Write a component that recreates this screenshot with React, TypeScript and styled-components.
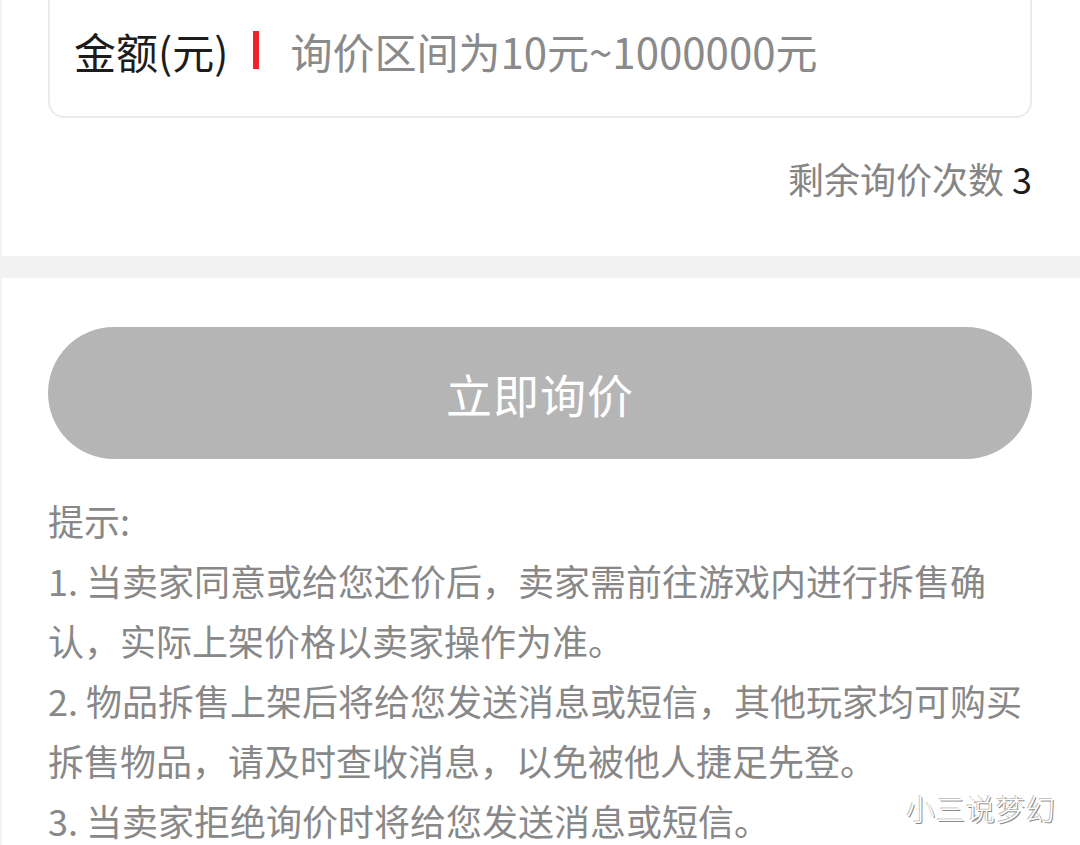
import React from "react";
import styled, { createGlobalStyle } from "styled-components";

const GlobalStyle = createGlobalStyle`
  html, body {
    margin: 0;
    padding: 0;
    background: #ffffff;
    font-family: "Noto Sans CJK SC", "Noto Sans", sans-serif;
  }
  * { box-sizing: border-box; }
`;

const Page = styled.div`
  position: relative;
  width: 1080px;
  height: 845px;
  overflow: hidden;
  background: #ffffff;
  border-left: 2px solid #f3f3f3;
`;

const Section = styled.section<{ $top?: number; $bottom?: number }>`
  background: #ffffff;
  padding: ${(p) => p.$top ?? 0}px 48px ${(p) => p.$bottom ?? 0}px 46px;
`;

const Divider = styled.div`
  height: 22px;
  background: #f2f2f2;
`;

const Card = styled.div`
  border: 2px solid #ebebeb;
  border-top: none;
  border-radius: 0 0 16px 16px;
  padding: 0 24px 16px 24px;
`;

const InputRow = styled.div`
  height: 100px;
  display: flex;
  align-items: center;
`;

const Label = styled.span`
  font-size: 42px;
  color: #1c1c1c;
  white-space: nowrap;
`;

const Caret = styled.span`
  width: 6px;
  height: 38px;
  background: #f0232d;
  margin: 0 31px 0 25px;
  flex: none;
`;

const Placeholder = styled.span`
  font-size: 42px;
  color: #8a8a8a;
  white-space: nowrap;
`;

const Remaining = styled.div`
  margin-top: 35px;
  height: 50px;
  line-height: 50px;
  text-align: right;
  font-size: 36px;
  color: #858585;
`;

const Count = styled.span`
  color: #1c1c1c;
`;

const SubmitButton = styled.button`
  display: flex;
  align-items: center;
  justify-content: center;
  width: 100%;
  height: 132px;
  border: none;
  border-radius: 66px;
  background: #b5b5b5;
  color: #ffffff;
  font-family: inherit;
  font-size: 46px;
  letter-spacing: 1px;
  cursor: default;
`;

const Tips = styled.div`
  margin-top: 31px;
  font-size: 36px;
  line-height: 60px;
  color: #888888;
`;

const TipLine = styled.div``;

const Watermark = styled.div`
  position: absolute;
  right: 24px;
  bottom: 16px;
  font-size: 29px;
  font-weight: 300;
  color: #ffffff;
  letter-spacing: 1px;
  text-shadow: 1px 1px 0 #8a8a8a, -1px -1px 0 #c4c4c4;
`;

export default function App() {
  return (
    <>
      <GlobalStyle />
      <Page>
        <Section $bottom={53}>
          <Card>
            <InputRow>
              <Label>金额(元)</Label>
              <Caret />
              <Placeholder>询价区间为10元~1000000元</Placeholder>
            </InputRow>
          </Card>
          <Remaining>
            剩余询价次数 <Count>3</Count>
          </Remaining>
        </Section>
        <Divider />
        <Section $top={49}>
          <SubmitButton>立即询价</SubmitButton>
          <Tips>
            <TipLine>提示:</TipLine>
            <TipLine>1. 当卖家同意或给您还价后，卖家需前往游戏内进行拆售确认，实际上架价格以卖家操作为准。</TipLine>
            <TipLine>2. 物品拆售上架后将给您发送消息或短信，其他玩家均可购买拆售物品，请及时查收消息，以免被他人捷足先登。</TipLine>
            <TipLine>3. 当卖家拒绝询价时将给您发送消息或短信。</TipLine>
          </Tips>
        </Section>
        <Watermark>小三说梦幻</Watermark>
      </Page>
    </>
  );
}
